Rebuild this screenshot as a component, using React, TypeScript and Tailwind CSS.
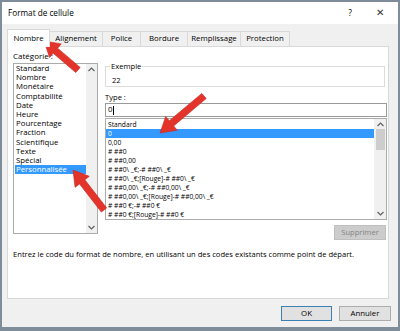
import React from 'react'

const categories = [
  'Standard',
  'Nombre',
  'Monétaire',
  'Comptabilité',
  'Date',
  'Heure',
  'Pourcentage',
  'Fraction',
  'Scientifique',
  'Texte',
  'Spécial',
  'Personnalisée',
]

const formats = [
  'Standard',
  '0',
  '0,00',
  '# ##0',
  '# ##0,00',
  '# ##0\\ _€;-# ##0\\ _€',
  '# ##0\\ _€;[Rouge]-# ##0\\ _€',
  '# ##0,00\\ _€;-# ##0,00\\ _€',
  '# ##0,00\\ _€;[Rouge]-# ##0,00\\ _€',
  '# ##0 €;-# ##0 €',
  '# ##0 €;[Rouge]-# ##0 €',
]

const tabs = [
  { label: 'Nombre', w: 'w-[43px]' },
  { label: 'Alignement', w: 'w-[53px]' },
  { label: 'Police', w: 'w-[38px]' },
  { label: 'Bordure', w: 'w-[47px]' },
  { label: 'Remplissage', w: 'w-[53px]' },
  { label: 'Protection', w: 'w-[49px]' },
]

// red callout arrow, tail -> tip
const arrowPoints = (x1: number, y1: number, x2: number, y2: number) => {
  const len = Math.hypot(x2 - x1, y2 - y1)
  const ux = (x2 - x1) / len
  const uy = (y2 - y1) / len
  const nx = -uy
  const ny = ux
  const shaft = 3.4
  const head = 9
  const headLen = 15
  const bx = x2 - ux * headLen
  const by = y2 - uy * headLen
  const pts = [
    [x1 + nx * shaft, y1 + ny * shaft],
    [bx + nx * shaft, by + ny * shaft],
    [bx + nx * head, by + ny * head],
    [x2, y2],
    [bx - nx * head, by - ny * head],
    [bx - nx * shaft, by - ny * shaft],
    [x1 - nx * shaft, y1 - ny * shaft],
  ]
  return pts.map((p) => p.join(',')).join(' ')
}

const ScrollArrow = ({ up }: { up?: boolean }) => (
  <svg width="7" height="5" viewBox="0 0 7 5" className="mx-auto">
    <path
      d={up ? 'M0.5 4 L3.5 1 L6.5 4' : 'M0.5 1 L3.5 4 L6.5 1'}
      fill="none"
      stroke="#606060"
      strokeWidth="1.2"
    />
  </svg>
)

export default function App() {
  return (
    <div
      className="relative h-[331px] w-[400px] overflow-hidden bg-[#7f8c9a] pt-[2px] px-[2px] pb-[4px] text-black"
      style={{ fontFamily: '"Open Sans", "Noto Sans", sans-serif' }}
    >
      <div className="flex h-full flex-col bg-[#f0f0f0]">
        {/* title bar */}
        <div className="flex h-[22px] items-center bg-white pl-[6px] text-[8.2px]">
          <span>Format de cellule</span>
          <span className="ml-auto text-[8.5px]">?</span>
          <span className="ml-[24px] mr-[14px] text-[9.5px] text-[#333]">✕</span>
        </div>

        {/* tabs */}
        <div className="flex h-[22px] items-end pl-[5px] text-[7.8px]">
          {tabs.map((t, i) =>
            i === 0 ? (
              <div
                key={t.label}
                className={`relative z-10 -mb-px flex h-[18px] items-center justify-center border border-b-0 border-[#d9d9d9] bg-white ${t.w}`}
              >
                {t.label}
              </div>
            ) : (
              <div
                key={t.label}
                className={`flex h-[15px] items-center justify-center border border-b-0 border-l-0 border-[#d9d9d9] bg-[#f0f0f0] ${t.w}`}
              >
                {t.label}
              </div>
            )
          )}
        </div>

        {/* panel */}
        <div className="ml-[5px] mr-[9px] h-[253px] border border-[#d9d9d9] bg-white pl-[5px] text-[8px]">
          <div className="flex">
            <div className="w-[85px] pt-[3px]">
              <div className="h-[12px] leading-[12px]">Catégorie :</div>
              <div className="mt-[1px] flex h-[171px] border border-[#ababab]">
                <div className="flex-1 pl-[1px] text-[7.8px] leading-[9.2px]">
                  {categories.map((c, i) => (
                    <div
                      key={c}
                      className={
                        i === categories.length - 1
                          ? 'h-[9.2px] bg-[#3399ff] pl-[1px] text-white'
                          : 'h-[9.2px] pl-[1px]'
                      }
                    >
                      {c}
                    </div>
                  ))}
                </div>
                <div className="flex w-[11px] flex-col justify-between bg-[#f0f0f0] py-[3px]">
                  <ScrollArrow up />
                  <ScrollArrow />
                </div>
              </div>
            </div>

            <div className="ml-[7px] w-[282px] pt-[14px]">
              <fieldset className="mr-[2px] h-[26px] border border-[#dcdcdc]">
                <legend className="ml-[4px] px-[1px] text-[7.6px] leading-[10px]">Exemple</legend>
                <div className="pl-[6px] pt-[4px] text-[7.6px] leading-[10px]">22</div>
              </fieldset>
              <div className="mt-[5px] h-[10px] text-[7.6px] leading-[10px]">Type :</div>
              <div className="mt-[1px] flex h-[14px] items-center border border-[#9a9a9a] pl-[2px] text-[7.8px]">
                <span>0</span>
                <span className="ml-[1px] h-[9px] w-px bg-black" />
              </div>
              <div className="mt-[1px] flex h-[102px] border border-[#ababab] text-[6.7px]">
                <div className="flex-1 pt-[1px] leading-[9px]">
                  {formats.map((f, i) => (
                    <div
                      key={i}
                      className={
                        i === 1
                          ? 'h-[9px] whitespace-pre bg-[#3399ff] pl-[2px] text-white'
                          : 'h-[9px] whitespace-pre pl-[2px]'
                      }
                    >
                      {f}
                    </div>
                  ))}
                </div>
                <div className="flex w-[12px] flex-col bg-[#f0f0f0] py-[3px]">
                  <ScrollArrow up />
                  <div className="mx-auto mt-[2px] h-[21px] w-[9px] bg-[#cdcdcd]" />
                  <div className="flex-1" />
                  <ScrollArrow />
                </div>
              </div>
              <div className="mt-[5px] flex justify-end pr-[1px]">
                <div className="flex h-[15px] w-[52px] items-center justify-center border border-[#bfbfbf] bg-[#cccccc] text-[7.6px] text-[#838383]">
                  Supprimer
                </div>
              </div>
            </div>
          </div>
          <div className="mt-[9px] whitespace-nowrap text-[7.6px] leading-[10px]">
            Entrez le code du format de nombre, en utilisant un des codes existants comme point de départ.
          </div>
        </div>

        {/* footer */}
        <div className="mt-[7px] flex justify-end gap-[7px] pr-[7px] text-[7.8px]">
          <div className="flex h-[15px] w-[51px] items-center justify-center border border-[#3c7fb1] bg-[#e1e1e1]">
            OK
          </div>
          <div className="flex h-[15px] w-[52px] items-center justify-center border border-[#adadad] bg-[#e1e1e1]">
            Annuler
          </div>
        </div>
      </div>

      {/* callout arrows */}
      <svg className="pointer-events-none absolute inset-0" width="400" height="331">
        <g fill="#e3342b" stroke="#c9261f" strokeWidth="0.6" strokeLinejoin="round">
          <polygon points={arrowPoints(78, 70, 44, 41)} />
          <polygon points={arrowPoints(204, 96, 160, 133)} />
          <polygon points={arrowPoints(104, 210, 73, 170)} />
        </g>
      </svg>
    </div>
  )
}
